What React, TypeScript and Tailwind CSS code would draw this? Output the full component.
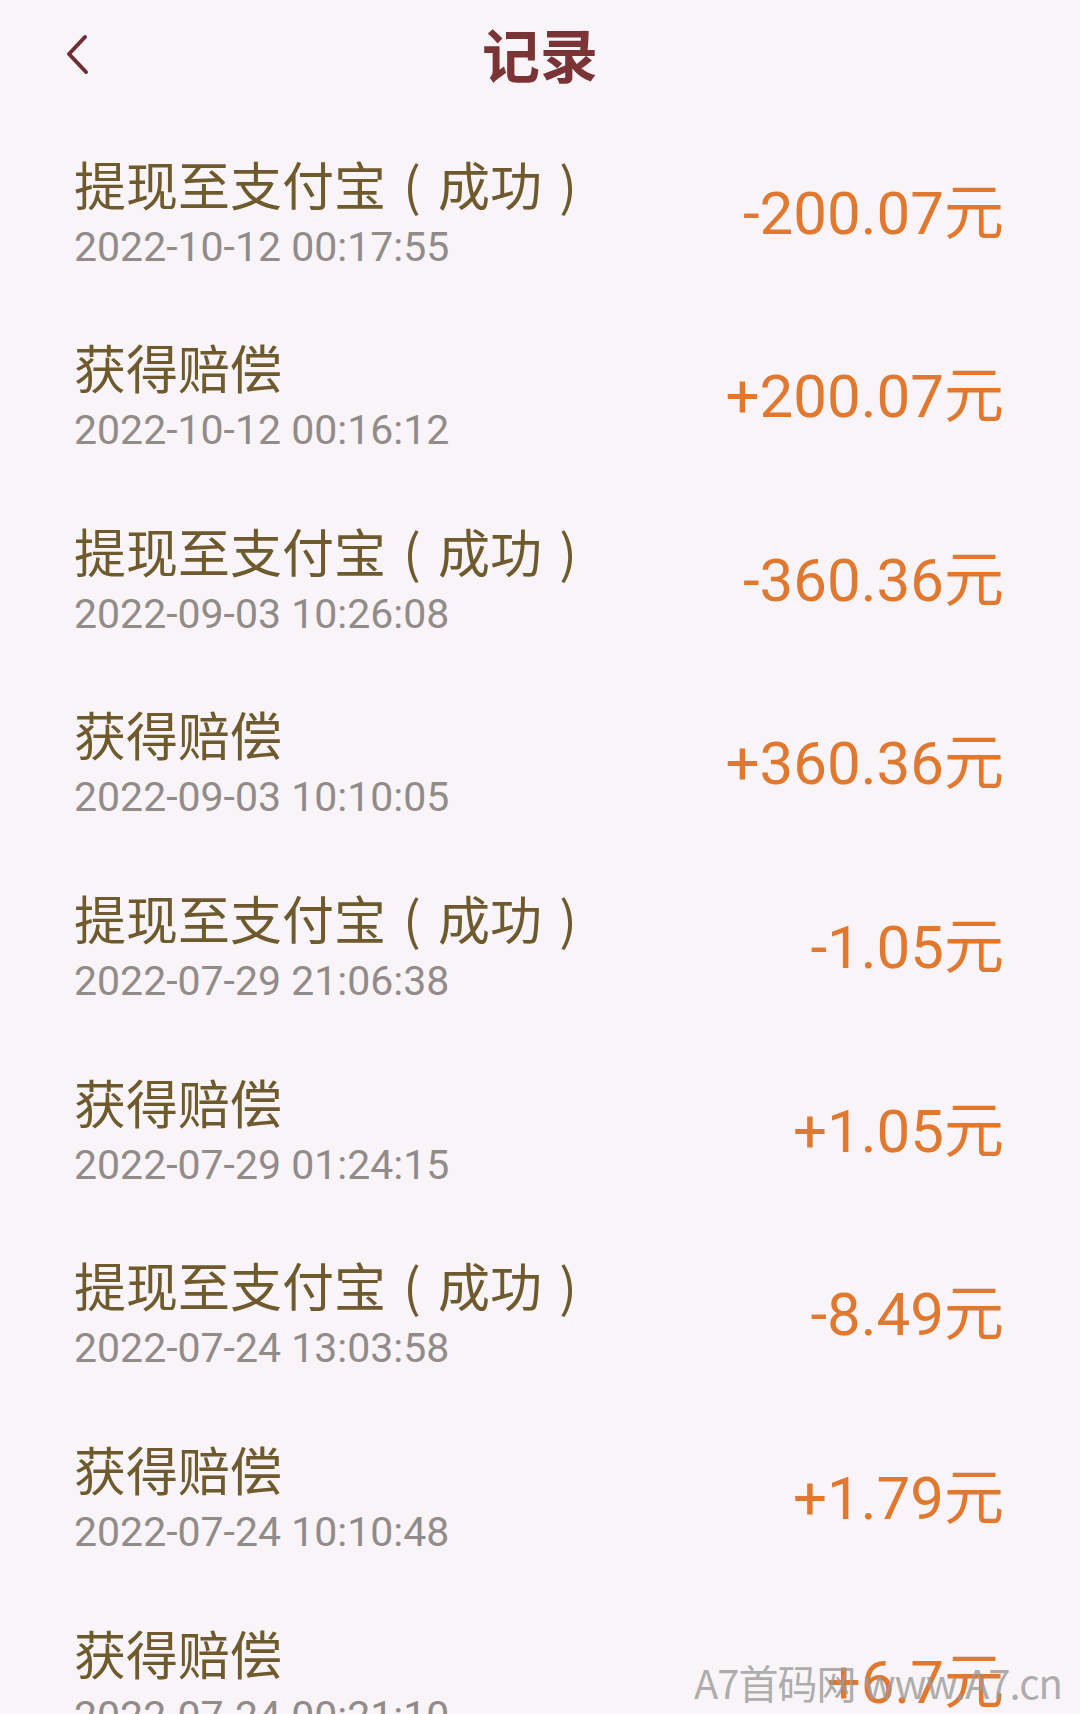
const records = [
  { title: "提现至支付宝", ok: true, time: "2022-10-12 00:17:55", amount: "-200.07" },
  { title: "获得赔偿", ok: false, time: "2022-10-12 00:16:12", amount: "+200.07" },
  { title: "提现至支付宝", ok: true, time: "2022-09-03 10:26:08", amount: "-360.36" },
  { title: "获得赔偿", ok: false, time: "2022-09-03 10:10:05", amount: "+360.36" },
  { title: "提现至支付宝", ok: true, time: "2022-07-29 21:06:38", amount: "-1.05" },
  { title: "获得赔偿", ok: false, time: "2022-07-29 01:24:15", amount: "+1.05" },
  { title: "提现至支付宝", ok: true, time: "2022-07-24 13:03:58", amount: "-8.49" },
  { title: "获得赔偿", ok: false, time: "2022-07-24 10:10:48", amount: "+1.79" },
  { title: "获得赔偿", ok: false, time: "2022-07-24 00:21:10", amount: "+6.7" },
];

const cjk = "font-['Noto_Sans_CJK_SC','Noto_Sans',sans-serif]";
const num = "font-['Roboto','Noto_Sans_CJK_SC',sans-serif]";

// bracket centred in a full-width cell, like the phone's system font
function Paren({ children }: { children: string }) {
  return <span className="inline-block w-[1em] text-center">{children}</span>;
}

export default function App() {
  return (
    <div className="relative h-[1714px] w-[1080px] overflow-hidden bg-[#f9f4f7]">
      {/* Header */}
      <header className="relative flex h-[106px] items-center justify-center">
        <svg
          className="absolute left-[62px] top-[32px]"
          width="30"
          height="46"
          viewBox="0 0 30 46"
          fill="none"
        >
          <path
            d="M23 5 L7 22 L24 40"
            stroke="#6e2c34"
            strokeWidth="4"
            strokeLinecap="round"
            strokeLinejoin="round"
          />
        </svg>
        <h1 className={`${cjk} text-[58px] font-bold leading-none text-[#7a3436]`}>记录</h1>
      </header>

      {/* Records */}
      <ul className="mt-[18.7px] flex flex-col">
        {records.map((r, i) => (
          <li
            key={i}
            className="flex h-[183.65px] items-center justify-between pl-[74px] pr-[76px]"
          >
            <div className="flex flex-col">
              <span className={`${cjk} text-[52px] leading-[60px] text-[#6f5a2e]`}>
                {r.title}
                {r.ok && (
                  <>
                    <Paren>(</Paren>成功<Paren>)</Paren>
                  </>
                )}
              </span>
              <span className={`${num} text-[41px] leading-[66px] text-[#918b89]`}>
                {r.time}
              </span>
            </div>
            <span className={`${num} pb-[6px] text-[60px] leading-none text-[#e0782f]`}>
              {r.amount}元
            </span>
          </li>
        ))}
      </ul>

      {/* Watermark */}
      <div
        className={`${cjk} pointer-events-none absolute left-[694px] top-[1658px] text-[40px] leading-[48px] tracking-[-1px] text-[#9a9a9a]/80`}
      >
        A7首码网 www.A7.cn
      </div>
    </div>
  );
}
